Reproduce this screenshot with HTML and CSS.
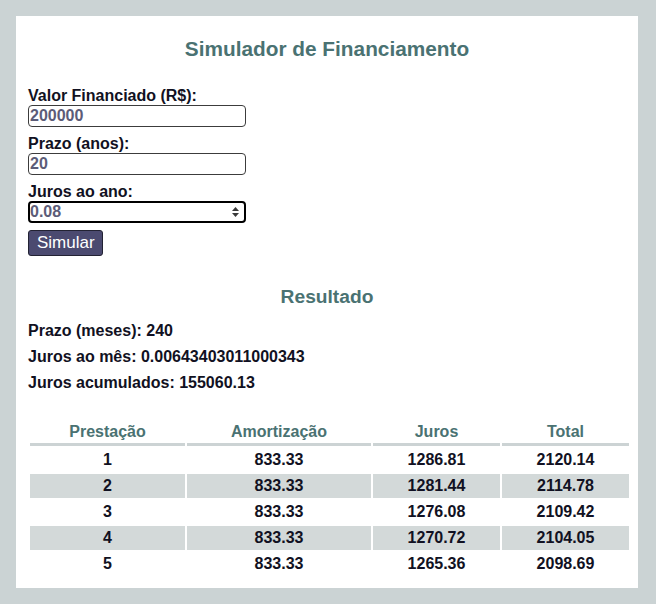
FILE: index.html
```html
<!DOCTYPE html>
<html lang="pt-BR">
<head>
<meta charset="utf-8">
<title>Simulador de Financiamento</title>
<link rel="stylesheet" href="styles.css">
</head>
<body>
<div class="card">
  <h1 class="title">Simulador de Financiamento</h1>
  <form class="form">
    <div class="group">
      <label class="label" for="valor">Valor Financiado (R$):</label>
      <div class="field"><input class="input" id="valor" type="text" value="200000"></div>
    </div>
    <div class="group">
      <label class="label" for="prazo">Prazo (anos):</label>
      <div class="field"><input class="input" id="prazo" type="text" value="20"></div>
    </div>
    <div class="group">
      <label class="label" for="juros">Juros ao ano:</label>
      <div class="field field-focus">
        <input class="input" id="juros" type="text" value="0.08">
        <svg class="spin" width="9" height="12" viewBox="0 0 9 12"><path d="M1 5 L4.5 1 L8 5 Z M1 7 L4.5 11 L8 7 Z" fill="#3a3a3a"/></svg>
      </div>
    </div>
    <button class="btn" type="button">Simular</button>
  </form>
  <h2 class="subtitle">Resultado</h2>
  <p class="line">Prazo (meses): 240</p>
  <p class="line">Juros ao mês: 0.00643403011000343</p>
  <p class="line">Juros acumulados: 155060.13</p>
  <table class="table">
    <thead>
      <tr><th class="c1">Prestação</th><th class="c2">Amortização</th><th class="c3">Juros</th><th class="c4">Total</th></tr>
    </thead>
    <tbody>
      <tr><td>1</td><td>833.33</td><td>1286.81</td><td>2120.14</td></tr>
      <tr><td>2</td><td>833.33</td><td>1281.44</td><td>2114.78</td></tr>
      <tr><td>3</td><td>833.33</td><td>1276.08</td><td>2109.42</td></tr>
      <tr><td>4</td><td>833.33</td><td>1270.72</td><td>2104.05</td></tr>
      <tr><td>5</td><td>833.33</td><td>1265.36</td><td>2098.69</td></tr>
    </tbody>
  </table>
</div>
</body>
</html>
```

FILE: styles.css
```css
html, body {
  margin: 0;
  padding: 0;
  background: #cbd3d4;
}
body {
  font-family: "Liberation Sans", Arial, sans-serif;
  color: #111122;
  padding: 16px;
  width: 656px;
  height: 604px;
  box-sizing: border-box;
  overflow: hidden;
}
.card {
  background: #ffffff;
  width: 622px;
  height: 572px;
  box-sizing: border-box;
  padding: 21px 7px 12px 12px;
}
.title {
  margin: 0;
  padding-right: 5px;
  text-align: center;
  font-size: 20.8px;
  line-height: 24px;
  font-weight: bold;
  color: #4a7272;
}
.form {
  margin: 25px 0 0 0;
}
.group {
  margin-bottom: 7px;
}
.label {
  display: block;
  font-size: 16px;
  line-height: 19px;
  font-weight: bold;
  color: #111122;
}
.field {
  display: flex;
  align-items: center;
  width: 218px;
  height: 22px;
  box-sizing: border-box;
  border: 1px solid #3c3c3c;
  border-radius: 4px;
  background: #fff;
  padding: 0 1px;
}
.field-focus {
  border: 2px solid #000;
  border-radius: 4px;
  padding: 0 4px 0 0;
}
.input {
  flex: 1;
  min-width: 0;
  border: none;
  outline: none;
  padding: 0;
  margin: 0;
  background: transparent;
  font-family: "Liberation Sans", Arial, sans-serif;
  font-size: 16px;
  font-weight: bold;
  line-height: 18px;
  color: #5c5c78;
}
.spin {
  display: block;
  flex: none;
}
.btn {
  display: block;
  margin-top: 1px;
  height: 26px;
  padding: 0 8px;
  box-sizing: border-box;
  width: 75px;
  background: #4b4a70;
  color: #ffffff;
  border: 1px solid #222233;
  border-radius: 3px;
  font-family: "Liberation Sans", Arial, sans-serif;
  font-size: 17px;
  line-height: 22px;
}
.subtitle {
  margin: 29px 0 0 0;
  padding-right: 5px;
  text-align: center;
  font-size: 19.2px;
  line-height: 24px;
  font-weight: bold;
  color: #4a7272;
}
.line {
  margin: 0;
  font-size: 16px;
  line-height: 26px;
  font-weight: bold;
}
.line:first-of-type {
  margin-top: 9px;
}
.table {
  margin-top: 22px;
  margin-left: 0;
  border-collapse: separate;
  border-spacing: 2px;
  table-layout: fixed;
  width: 603px;
}
.table th, .table td {
  font-size: 16px;
  font-weight: bold;
  line-height: 18px;
  text-align: center;
  padding: 3px 4px;
}
.table th {
  color: #4a7272;
  padding: 3px 4px 2px 4px;
  border-bottom: 3px solid #ccd3d4;
}
.c1 { width: 155px; }
.c2 { width: 184px; }
.c3 { width: 127px; }
.c4 { width: 127px; }
.table th.c1, .table th.c2, .table th.c3, .table th.c4 {
  box-sizing: border-box;
}
.table tbody tr:nth-child(even) td {
  background: #d3d9d9;
}
```
